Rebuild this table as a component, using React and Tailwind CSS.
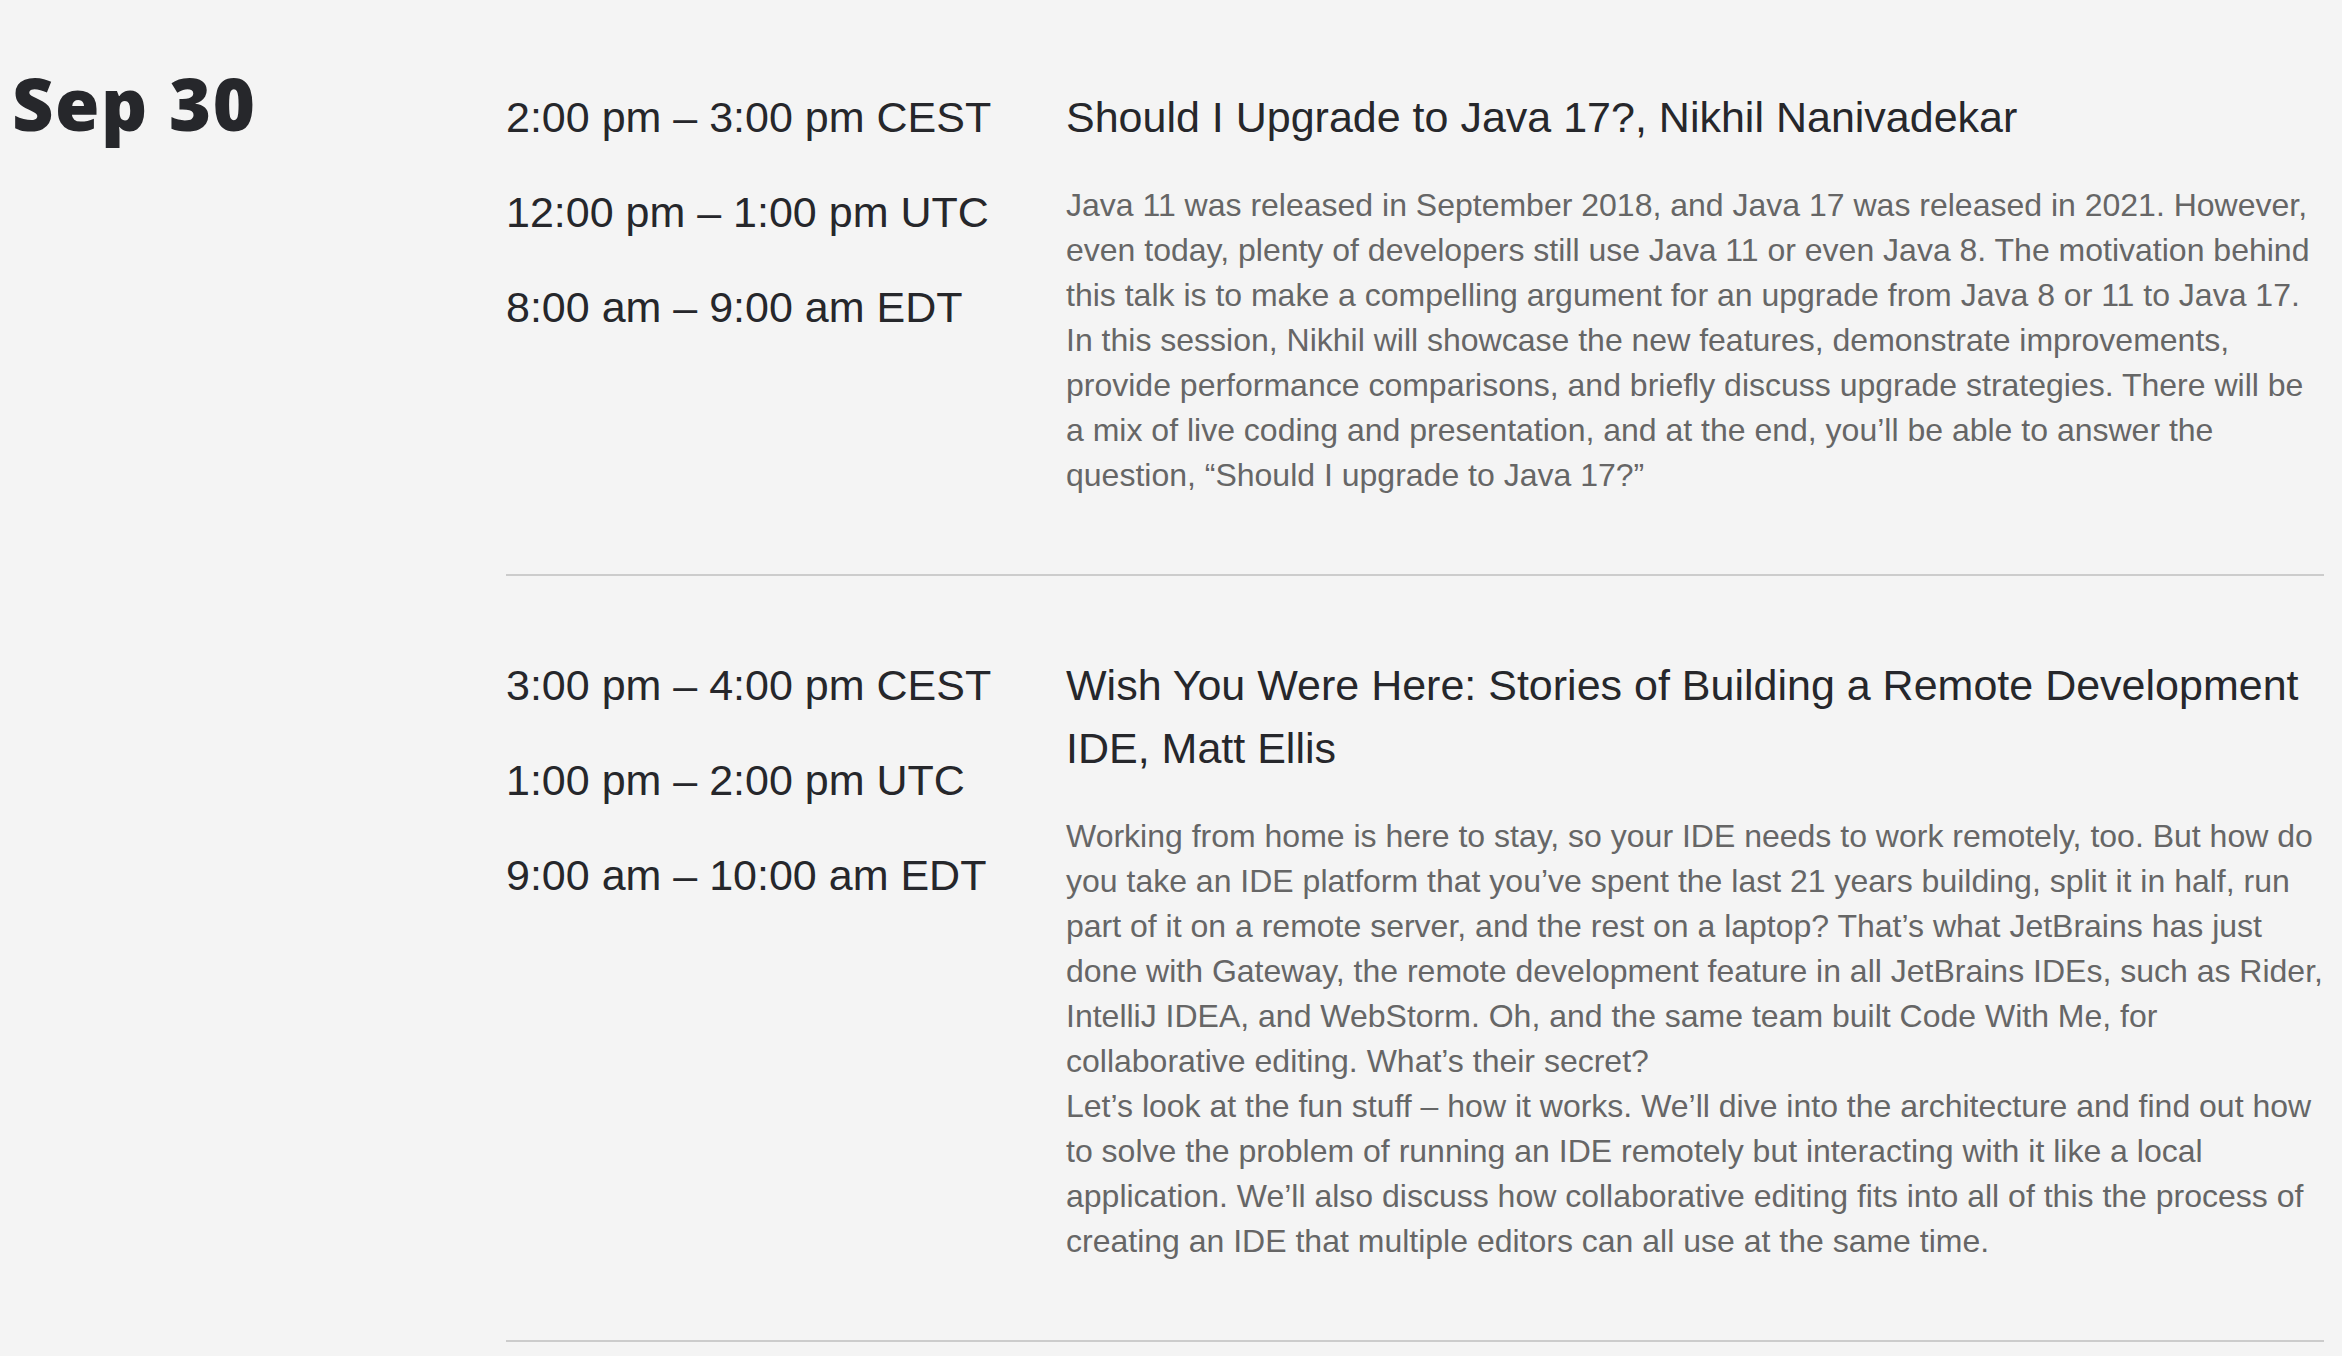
import React from 'react';

const sessions = [
    {
        times: ['2:00 pm – 3:00 pm CEST', '12:00 pm – 1:00 pm UTC', '8:00 am – 9:00 am EDT'],
        title: 'Should I Upgrade to Java 17?, Nikhil Nanivadekar',
        body: [
            'Java 11 was released in September 2018, and Java 17 was released in 2021. However, even today, plenty of developers still use Java 11 or even Java 8. The motivation behind this talk is to make a compelling argument for an upgrade from Java 8 or 11 to Java 17. In this session, Nikhil will showcase the new features, demonstrate improvements, provide performance comparisons, and briefly discuss upgrade strategies. There will be a mix of live coding and presentation, and at the end, you’ll be able to answer the question, “Should I upgrade to Java 17?”',
        ],
    },
    {
        times: ['3:00 pm – 4:00 pm CEST', '1:00 pm – 2:00 pm UTC', '9:00 am – 10:00 am EDT'],
        title: 'Wish You Were Here: Stories of Building a Remote Development IDE, Matt Ellis',
        body: [
            'Working from home is here to stay, so your IDE needs to work remotely, too. But how do you take an IDE platform that you’ve spent the last 21 years building, split it in half, run part of it on a remote server, and the rest on a laptop? That’s what JetBrains has just done with Gateway, the remote development feature in all JetBrains IDEs, such as Rider, IntelliJ IDEA, and WebStorm. Oh, and the same team built Code With Me, for collaborative editing. What’s their secret?',
            'Let’s look at the fun stuff – how it works. We’ll dive into the architecture and find out how to solve the problem of running an IDE remotely but interacting with it like a local application. We’ll also discuss how collaborative editing fits into all of this the process of creating an IDE that multiple editors can all use at the same time.',
        ],
    },
];

function Session({ session }) {
    return (
        <div className="flex border-b-2 border-[#cccccc] pt-[78px] pb-[76px]">
            <div className="w-[560px] shrink-0">
                {session.times.map((t) => (
                    <p key={t} className="text-[43px] leading-[63px] mb-[32px] text-[#26272b]">
                        {t}
                    </p>
                ))}
            </div>
            <div className="flex-1 min-w-0">
                <h3 className="text-[43px] leading-[63px] text-[#26272b] mb-[34px]">{session.title}</h3>
                {session.body.map((para, i) => (
                    <p key={i} className="text-[32px] leading-[45px] text-[#666666]">
                        {para}
                    </p>
                ))}
            </div>
        </div>
    );
}

export default function App() {
    return (
        <div className="min-h-screen bg-[#f4f4f4] flex pl-[12px] pr-[18px] font-['Liberation_Sans',Arial,sans-serif]">
            <div className="w-[494px] shrink-0 pt-[67px]">
                <h2 className="font-['Open_Sans',sans-serif] font-extrabold text-[72px] leading-none tracking-[1.5px] text-[#26272b]">
                    Sep 30
                </h2>
            </div>
            <div className="flex-1 min-w-0 pt-[8px]">
                {sessions.map((s) => (
                    <Session key={s.title} session={s} />
                ))}
            </div>
        </div>
    );
}
